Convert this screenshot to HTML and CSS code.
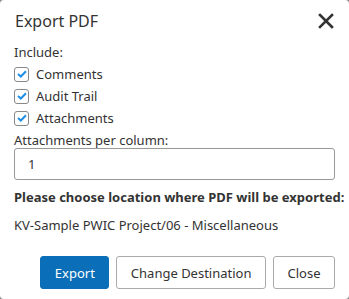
FILE: index.html
```html
<!DOCTYPE html>
<html lang="en">
<head>
  <meta charset="UTF-8">
  <meta name="viewport" content="width=device-width, initial-scale=1.0">
  <title>Export PDF</title>
  <link rel="stylesheet" href="styles.css">
</head>
<body>
  <div class="dialog">
    <div class="dialog-header">
      <h1 class="dialog-title">Export PDF</h1>
      <button class="close-x" aria-label="Close">
        <svg width="16" height="16" viewBox="0 0 16 16">
          <path d="M2 2 L14 14 M14 2 L2 14" stroke="#333" stroke-width="2.6" stroke-linecap="square"/>
        </svg>
      </button>
    </div>

    <div class="dialog-body">
      <div class="label">Include:</div>
      <label class="check-row">
        <span class="checkbox"><svg width="10" height="8" viewBox="0 0 10 8"><path d="M1 4 L3.8 6.5 L9 1.2" fill="none" stroke="#1e8fe6" stroke-width="2"/></svg></span>
        Comments
      </label>
      <label class="check-row">
        <span class="checkbox"><svg width="10" height="8" viewBox="0 0 10 8"><path d="M1 4 L3.8 6.5 L9 1.2" fill="none" stroke="#1e8fe6" stroke-width="2"/></svg></span>
        Audit Trail
      </label>
      <label class="check-row">
        <span class="checkbox"><svg width="10" height="8" viewBox="0 0 10 8"><path d="M1 4 L3.8 6.5 L9 1.2" fill="none" stroke="#1e8fe6" stroke-width="2"/></svg></span>
        Attachments
      </label>
      <div class="label label-input">Attachments per column:</div>
      <input type="text" class="text-input" value="1">

      <div class="location-title">Please choose location where PDF will be exported:</div>
      <div class="location">KV-Sample PWIC Project/06 - Miscellaneous</div>
    </div>

    <div class="dialog-footer">
      <button class="btn btn-primary">Export</button>
      <button class="btn">Change Destination</button>
      <button class="btn">Close</button>
    </div>
  </div>
</body>
</html>
```

FILE: styles.css
```css
html {
  background-color: #8a8a8a;
}

body {
  font-family: "Noto Sans", "Open Sans", Arial, sans-serif;
  margin: 0;
  height: 299px;
  color: #333;
}

.dialog {
  background-color: #fff;
  border-radius: 4px;
  height: 100%;
  box-sizing: border-box;
  padding: 0 14px;
}

.dialog-header {
  display: flex;
  justify-content: space-between;
  align-items: center;
  height: 42px;
}

.dialog-title {
  font-size: 16px;
  font-weight: normal;
  margin: 0 0 0 1px;
  color: #333;
}

.close-x {
  background: none;
  border: none;
  padding: 0;
  width: 18px;
  height: 18px;
  display: flex;
  align-items: center;
  justify-content: center;
  cursor: pointer;
}

.dialog-body {
  font-size: 13px;
  margin-top: -1px;
}

.label {
  height: 22px;
  line-height: 22px;
}

.label-input {
  height: 19px;
}

.check-row {
  display: flex;
  align-items: center;
  gap: 7px;
  height: 22px;
}

.checkbox {
  width: 15px;
  height: 15px;
  border: 1px solid #888;
  border-radius: 3px;
  display: flex;
  align-items: center;
  justify-content: center;
  box-sizing: border-box;
}

.text-input {
  display: block;
  width: 100%;
  box-sizing: border-box;
  height: 32px;
  margin: 0;
  padding: 0 13px;
  font-family: inherit;
  font-size: 13px;
  color: #333;
  border: 1px solid #999;
  border-radius: 3px;
}

.location-title {
  font-weight: bold;
  margin-top: 8px;
  line-height: 18px;
  white-space: nowrap;
}

.location {
  margin-top: 10px;
  line-height: 18px;
}

.dialog-footer {
  display: flex;
  justify-content: flex-end;
  gap: 7px;
  margin-top: 22px;
}

.btn {
  font-family: inherit;
  font-size: 13px;
  height: 33px;
  padding: 0 13.5px;
  background-color: #fff;
  color: #333;
  border: 1px solid #aaa;
  border-radius: 3px;
  cursor: pointer;
}

.btn-primary {
  background-color: #0a6fb8;
  border-color: #0a6fb8;
  color: #fff;
}
```
